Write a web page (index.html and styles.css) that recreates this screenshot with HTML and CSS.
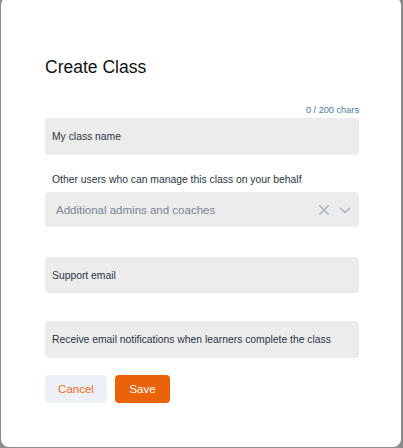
FILE: index.html
```html
<!DOCTYPE html>
<html lang="en">
<head>
<meta charset="utf-8">
<title>Create Class</title>
<link rel="stylesheet" href="styles.css">
</head>
<body>
<div class="modal">
  <h1 class="title">Create Class</h1>
  <div class="counter">0 / 200 chars</div>
  <div class="field">My class name</div>
  <div class="label">Other users who can manage this class on your behalf</div>
  <div class="select">
    <span class="placeholder">Additional admins and coaches</span>
    <span class="icons">
      <svg class="ico" width="12" height="12" viewBox="0 0 12 12"><path d="M1.5 1.5 L10.5 10.5 M10.5 1.5 L1.5 10.5" stroke="#a3acb9" stroke-width="1.3" fill="none"/></svg>
      <svg class="ico" width="12" height="12" viewBox="0 0 12 12"><path d="M1 3.8 L6 8.5 L11 3.8" stroke="#a3acb9" stroke-width="1.3" fill="none"/></svg>
    </span>
  </div>
  <div class="field email">Support email</div>
  <div class="field notify">Receive email notifications when learners complete the class</div>
  <div class="actions">
    <button class="btn cancel">Cancel</button>
    <button class="btn save">Save</button>
  </div>
</div>
</body>
</html>
```
FILE: styles.css
```css
html, body {
  margin: 0;
  padding: 0;
  height: 100%;
  overflow: hidden;
}
body {
  background: #8d8d8d;
  font-family: "Liberation Sans", Arial, Helvetica, sans-serif;
}
.modal {
  box-sizing: border-box;
  margin: -3px 0 0 1px;
  width: 400px;
  height: 450px;
  background: #ffffff;
  border-radius: 8px;
  padding: 58px 42px 0 44px;
  display: flex;
  flex-direction: column;
}
.title {
  margin: 0;
  font-weight: normal;
  font-size: 17.5px;
  line-height: 24px;
  color: #111;
}
.counter {
  margin-top: 25px;
  text-align: right;
  font-size: 9.2px;
  line-height: 12px;
  color: #4a7ca6;
}
.field {
  margin-top: 2px;
  height: 37px;
  background: #ececec;
  border-radius: 4px;
  display: flex;
  align-items: center;
  padding: 0 7px;
  font-size: 10.35px;
  color: #2b3445;
}
.label {
  margin-top: 18px;
  padding-left: 7px;
  font-size: 10.35px;
  line-height: 14px;
  color: #2b3445;
}
.select {
  margin-top: 5px;
  height: 35px;
  background: #ececec;
  border-radius: 4px;
  display: flex;
  align-items: center;
  justify-content: space-between;
  padding: 0 8px 0 11px;
}
.placeholder {
  font-size: 11.5px;
  color: #7a8494;
}
.icons {
  display: flex;
  gap: 9px;
  align-items: center;
}
.ico { display: block; }
.field.email {
  margin-top: 30px;
  height: 36px;
}
.field.notify {
  margin-top: 28px;
  height: 37px;
}
.actions {
  margin-top: 17px;
  display: flex;
  gap: 8px;
}
.btn {
  border: none;
  border-radius: 4px;
  height: 28px;
  font-family: inherit;
  font-size: 11.5px;
  padding: 0;
}
.cancel {
  width: 62px;
  background: #edf0f7;
  color: #f06a1f;
}
.save {
  width: 55px;
  background: #eb6308;
  color: #ffffff;
}
```
